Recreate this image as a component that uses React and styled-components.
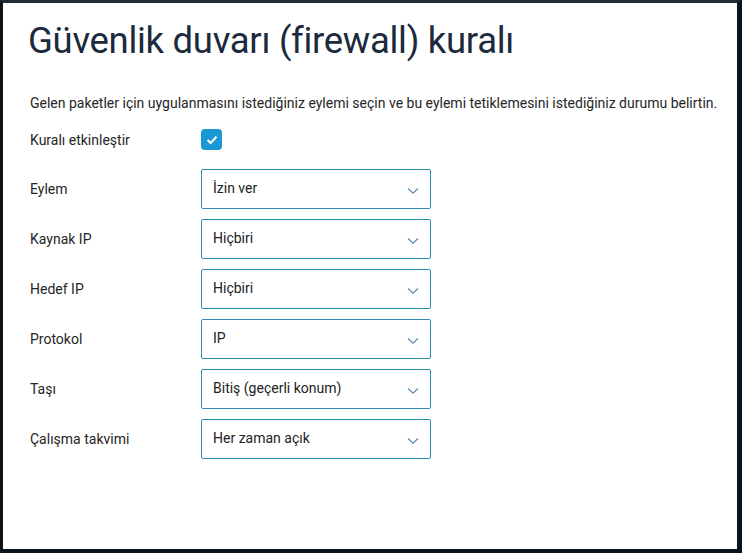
import React from 'react';
import styled, { createGlobalStyle } from 'styled-components';

const GlobalStyle = createGlobalStyle`
  html, body {
    margin: 0;
    padding: 0;
    background: #ffffff;
  }
  body {
    font-family: Roboto, "Liberation Sans", sans-serif;
  }
`;

const Frame = styled.div`
  box-sizing: border-box;
  width: 742px;
  height: 553px;
  border-style: solid;
  border-color: #0d1419;
  border-width: 3px 5px 4px 3px;
  border-top-color: #1d2c36;
  background: #fff;
  padding: 16px 0 0 25px;
`;

const Title = styled.h1`
  margin: 0;
  font-size: 36.5px;
  font-weight: 400;
  line-height: 44px;
  color: #1b2a3c;
  letter-spacing: -0.3px;
`;

const Intro = styled.p`
  margin: 30px 0 16px 2px;
  font-size: 14px;
  line-height: 20px;
  color: #262626;
`;

const Form = styled.div`
  display: flex;
  flex-direction: column;
  gap: 10px;
  padding-left: 2px;
`;

const Row = styled.div`
  display: grid;
  grid-template-columns: 171px 230px;
  align-items: center;
  min-height: ${(p) => (p.$compact ? '20px' : '40px')};
  margin-bottom: ${(p) => (p.$compact ? '9px' : '0')};
`;

const Label = styled.span`
  font-size: 14px;
  color: #262626;
`;

const Check = styled.span`
  display: flex;
  align-items: center;
  justify-content: center;
  width: 21px;
  height: 21px;
  border-radius: 4px;
  background: #1a98d5;
`;

const Select = styled.div`
  box-sizing: border-box;
  height: 40px;
  display: flex;
  align-items: center;
  justify-content: space-between;
  padding: 0 11px 3px 11px;
  border: 1px solid #2c8db3;
  border-radius: 2px;
  font-size: 14px;
  color: #222;
  background: #fff;
`;

const Chevron = () => (
  <svg width="12" height="8" viewBox="0 0 12 8" style={{ marginTop: 6 }}>
    <path d="M1 1.5 L6 6.2 L11 1.5" fill="none" stroke="#6a88a6" strokeWidth="1.3" />
  </svg>
);

const fields = [
  ['Eylem', 'İzin ver'],
  ['Kaynak IP', 'Hiçbiri'],
  ['Hedef IP', 'Hiçbiri'],
  ['Protokol', 'IP'],
  ['Taşı', 'Bitiş (geçerli konum)'],
  ['Çalışma takvimi', 'Her zaman açık'],
];

export default function App() {
  return (
    <>
      <GlobalStyle />
      <Frame>
        <Title>Güvenlik duvarı (firewall) kuralı</Title>
        <Intro>
          Gelen paketler için uygulanmasını istediğiniz eylemi seçin ve bu eylemi tetiklemesini istediğiniz durumu belirtin.
        </Intro>
        <Form>
          <Row $compact>
            <Label>Kuralı etkinleştir</Label>
            <Check>
              <svg width="12" height="10" viewBox="0 0 12 10">
                <path d="M1.5 5 L4.6 8 L10.5 1.8" fill="none" stroke="#fff" strokeWidth="2" />
              </svg>
            </Check>
          </Row>
          {fields.map(([label, value]) => (
            <Row key={label}>
              <Label>{label}</Label>
              <Select>
                <span>{value}</span>
                <Chevron />
              </Select>
            </Row>
          ))}
        </Form>
      </Frame>
    </>
  );
}
